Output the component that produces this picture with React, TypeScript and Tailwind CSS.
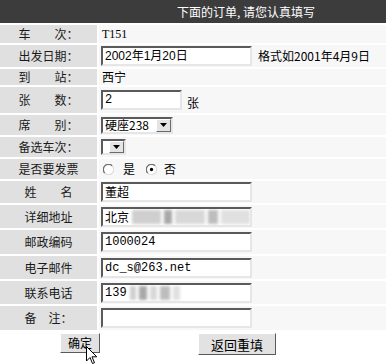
import React from "react";

const cjk = "font-['Noto_Sans_CJK_SC','Liberation_Sans',sans-serif]";
const mono = "font-['Liberation_Mono','Noto_Sans_CJK_SC',monospace]";

/* ─── form bits ─── */
function Field({ w = "w-[151px]", h = "h-[20px]", className = "", children }: { w?: string; h?: string; className?: string; children?: React.ReactNode }) {
  return (
    <div
      className={`${w} ${h} flex items-center overflow-hidden whitespace-nowrap bg-white border-2 border-t-[#5a5a5a] border-l-[#5a5a5a] border-b-[#e6e6e6] border-r-[#e6e6e6] pl-[2px] text-[12px] text-black ${className}`}
    >
      {children}
    </div>
  );
}

function Blur({ w }: { w: string }) {
  return (
    <div className={`${w} h-[14px] ml-[3px] flex gap-[3px] blur-[1.5px]`}>
      <div className="flex-1 bg-[#cfcfcf]" />
      <div className="w-[8px] bg-[#a8a8a8]" />
      <div className="flex-1 bg-[#d8d8d8]" />
      <div className="w-[10px] bg-[#bdbdbd]" />
      <div className="flex-1 bg-[#e0e0e0]" />
    </div>
  );
}

function Arrow() {
  return (
    <div className="w-[15px] h-full flex items-center justify-center bg-[#e4e4e4] border border-t-white border-l-white border-b-[#6a6a6a] border-r-[#6a6a6a]">
      <svg width="7" height="4" viewBox="0 0 7 4">
        <path d="M0 0 L7 0 L3.5 4 Z" fill="#000" />
      </svg>
    </div>
  );
}

function Radio({ checked }: { checked?: boolean }) {
  return (
    <svg width="11" height="11" viewBox="0 0 12 12">
      <circle cx="6" cy="6" r="5.5" fill="#fff" />
      <path d="M10 2 A5.5 5.5 0 0 0 2 10" stroke="#6e6e6e" strokeWidth="1.4" fill="none" />
      <path d="M2 10 A5.5 5.5 0 0 0 10 2" stroke="#dcdcdc" strokeWidth="1.2" fill="none" />
      {checked && <circle cx="6" cy="6" r="1.8" fill="#000" />}
    </svg>
  );
}

function Row({ label, h, children }: { label: string; h: string; children?: React.ReactNode }) {
  return (
    <div className={`flex gap-[2px] ${h}`}>
      <div className="w-[97px] bg-[#e0e0e0] flex items-center justify-center text-[12px] text-[#1a1a1a] whitespace-pre">
        {label}
      </div>
      <div className="flex-1 bg-[#f7f7f7] flex items-center pl-[2px]">{children}</div>
    </div>
  );
}

export default function App() {
  return (
    <div className={`relative w-[386px] h-[364px] bg-white overflow-hidden ${cjk}`}>
      {/* ─── HEADER ─── */}
      <div className="h-[23px] bg-[#3c3c3c] flex items-center pl-[177px] text-[12px] text-white whitespace-pre">
        下面的订单, 请您认真填写
      </div>

      <div className="mt-[2px] flex flex-col gap-[2px]">
        <Row label={"车　　次："} h="h-[18px]">
          <span className="text-[12px] font-['Liberation_Serif',serif] pl-[1px]">T151</span>
        </Row>

        <Row label={"出发日期："} h="h-[22px]">
          <Field className="font-['Liberation_Sans','Noto_Sans_CJK_SC',sans-serif]">2002年1月20日</Field>
          <span className="ml-[6px] text-[12px]">格式如2001年4月9日</span>
        </Row>

        <Row label={"到　　站："} h="h-[16px]">
          <span className="text-[12px] pl-[1px]">西宁</span>
        </Row>

        <Row label={"张　　数："} h="h-[26px]">
          <Field w="w-[81px]" className={mono}>2</Field>
          <span className="ml-[5px] mt-[6px] text-[12px]">张</span>
        </Row>

        <Row label={"席　　别："} h="h-[20px]">
          <div className="w-[72px] h-[17px] flex items-center bg-white border-2 border-t-[#5a5a5a] border-l-[#5a5a5a] border-b-[#e6e6e6] border-r-[#e6e6e6]">
            <span className="flex-1 pl-[2px] text-[12px] leading-none">硬座238</span>
            <Arrow />
          </div>
        </Row>

        <Row label={"备选车次："} h="h-[20px]">
          <div className="w-[25px] h-[16px] flex items-center justify-end bg-white border-2 border-t-[#5a5a5a] border-l-[#5a5a5a] border-b-[#e6e6e6] border-r-[#e6e6e6]">
            <Arrow />
          </div>
        </Row>

        <Row label="是否要发票" h="h-[20px]">
          <div className="flex items-center text-[12px] pl-[2px]">
            <Radio />
            <span className="ml-[9px]">是</span>
            <span className="ml-[11px]"><Radio checked /></span>
            <span className="ml-[7px]">否</span>
          </div>
        </Row>

        <Row label={"姓　　名"} h="h-[22px]">
          <Field>董超</Field>
        </Row>

        <Row label="详细地址" h="h-[23px]">
          <Field>
            北京
            <Blur w="w-[118px]" />
          </Field>
        </Row>

        <Row label="邮政编码" h="h-[24px]">
          <Field className={`${mono} text-[11.5px]`}>1000024</Field>
        </Row>

        <Row label="电子邮件" h="h-[23px]">
          <Field className={`${mono} text-[11.5px]`}>dc_s@263.net</Field>
        </Row>

        <Row label="联系电话" h="h-[23px]">
          <Field className={`${mono} text-[11.5px]`}>
            139
            <Blur w="w-[50px]" />
          </Field>
        </Row>

        <Row label={"备　注："} h="h-[24px]">
          <Field />
        </Row>
      </div>

      {/* ─── BUTTONS ─── */}
      <div className="mt-[2px] flex items-start h-[24px]">
        <button className="ml-[60px] mt-[1px] w-[40px] h-[20px] bg-[#e2e2e2] border border-t-white border-l-white border-b-[#5a5a5a] border-r-[#5a5a5a] text-[12px] leading-none text-black">
          确定
        </button>
        <button className="ml-[98px] mt-[1px] w-[78px] h-[22px] bg-[#e2e2e2] border border-t-white border-l-white border-b-[#5a5a5a] border-r-[#5a5a5a] text-[13px] leading-none text-black">
          返回重填
        </button>
      </div>

      {/* mouse pointer over the submit button */}
      <svg className="absolute left-[86px] top-[346px]" width="12" height="19" viewBox="0 0 12 19">
        <path d="M0.5 0.5 L0.5 15 L4 11.5 L6.5 17.5 L8.5 16.7 L6 10.8 L10.8 10.8 Z" fill="#fff" stroke="#000" strokeWidth="1" />
      </svg>
    </div>
  );
}
